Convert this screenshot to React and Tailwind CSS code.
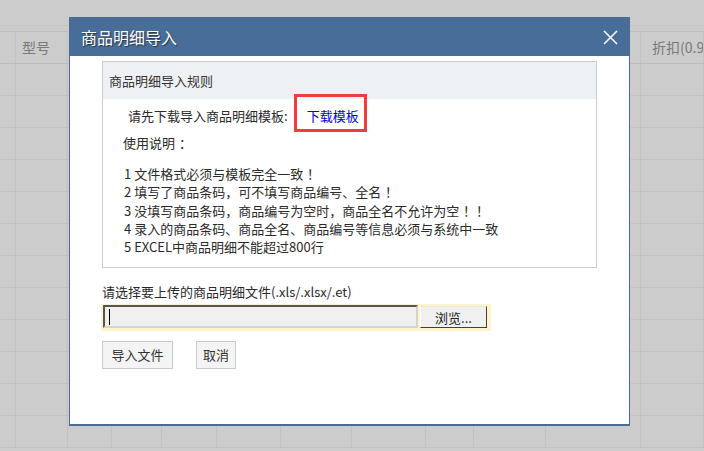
import React from "react";

const cols = [16, 52, 44, 50, 55, 64, 71, 74, 48, 72, 95, 63];

function Row({ header }) {
  return (
    <div className={"flex " + (header ? "h-[33px] border-y border-[#bdbdbd]" : "h-[32px] border-b border-[#c2c2c2]")}>
      {cols.map((w, i) => (
        <div
          key={i}
          style={{ width: w }}
          className="shrink-0 border-r border-[#c2c2c2] flex items-center overflow-hidden whitespace-nowrap text-[14px] text-[#7a7a7a]"
        >
          {header && i === 1 ? <span className="pl-[6px]">型号</span> : null}
          {header && i === 11 ? <span className="pl-[11px]">折扣(0.9</span> : null}
        </div>
      ))}
    </div>
  );
}

function FW({ text }) {
  const parts = [];
  let buf = "";
  Array.from(text).forEach((ch, i) => {
    if ("！，：、".includes(ch)) {
      if (buf) parts.push(buf);
      buf = "";
      const centered = ch === "！" || ch === "：";
      parts.push(
        <span key={i} className="inline-block w-[1em] whitespace-nowrap">
          <span className={centered ? "relative left-[0.3em]" : ""}>{ch}</span>
        </span>
      );
    } else {
      buf += ch;
    }
  });
  if (buf) parts.push(buf);
  return <>{parts}</>;
}

export default function App() {
  const rules = [
    "1 文件格式必须与模板完全一致！",
    "2 填写了商品条码，可不填写商品编号、全名！",
    "3 没填写商品条码，商品编号为空时，商品全名不允许为空！！",
    "4 录入的商品条码、商品全名、商品编号等信息必须与系统中一致",
    "5 EXCEL中商品明细不能超过800行",
  ];
  return (
    <div className="relative w-[704px] h-[451px] overflow-hidden bg-[#cccccc] font-['Noto_Sans_CJK_SC','Noto_Sans',sans-serif]">
      {/* background table */}
      <div className="flex flex-col">
        <div className="h-[25px]" />
        <div className="h-px bg-[#c4c4c4]" />
        <div className="h-[5px]" />
        <Row header />
        {Array.from({ length: 12 }).map((_, i) => (
          <Row key={i} />
        ))}
      </div>

      {/* dialog */}
      <div className="absolute left-[69px] top-[17px] w-[561px] h-[409px] bg-white border border-[#4a6b94] border-b-2 flex flex-col">
        <div className="h-[38px] shrink-0 bg-[#486d98] flex items-center justify-between pl-[11px] pr-[10px]">
          <span className="text-white text-[16px] leading-none [text-shadow:1px_1px_1px_rgba(0,0,0,0.55)]">商品明细导入</span>
          <svg width="15" height="15" viewBox="0 0 15 15" className="mr-[1px]">
            <path d="M1 1L14 14M14 1L1 14" stroke="white" strokeWidth="1.6" fill="none" />
          </svg>
        </div>

        <div className="ml-[32px] mt-[5px] w-[495px] h-[207px] border border-[#cccccc] flex flex-col text-[13px] text-[#2a2a2a]">
          <div className="h-[37px] shrink-0 bg-[#eef1f4] flex items-center pl-[6px] text-[#333]">商品明细导入规则</div>
          <div className="mt-[8px] h-[18px] leading-[18px] pl-[25px] flex whitespace-nowrap">
            <span>请先下载导入商品明细模板:</span>
            <span className="relative ml-[19px] text-[#0000ee]">
              下载模板
              <span className="absolute left-[-13px] right-[-8px] top-[-13px] bottom-[-7px] border-[3px] border-[#f03c3c]" />
            </span>
          </div>
          <div className="mt-[9px] leading-[18px] pl-[20px]">
            <FW text="使用说明：" />
          </div>
          <div className="mt-[13px] pl-[21px] leading-[18.25px]">
            {rules.map((r) => (
              <div key={r} className="whitespace-nowrap">
                <FW text={r} />
              </div>
            ))}
          </div>
        </div>

        <div className="ml-[32px] mt-[15px] leading-[18px] text-[13px] text-[#2a2a2a]">请选择要上传的商品明细文件(.xls/.xlsx/.et)</div>

        <div className="ml-[31px] mt-[3px] w-[390px] h-[27px] bg-[#fff3cc] px-[2px] py-[1px] flex items-start">
          <div className="w-[315px] h-[23px] bg-[#f0f0f0] border-2 border-t-[#555] border-l-[#555] border-b-[#d4d4d4] border-r-[#d4d4d4] flex items-center pl-[4px]">
            <div className="w-px h-[16px] bg-black" />
          </div>
          <div className="ml-[2px] mt-[1px] w-[67px] h-[22px] bg-[#f0f0f0] border border-t-[#e6e6e6] border-l-[#ffffff] border-b-[#404040] border-r-[#404040] flex items-center justify-center text-[13px] text-[#222] leading-none">
            浏览...
          </div>
        </div>

        <div className="ml-[32px] mt-[10px] flex gap-[23px] text-[13px] text-[#333]">
          <div className="w-[71px] h-[28px] bg-[#f4f4f4] border border-[#c9c9c9] flex items-center justify-center">导入文件</div>
          <div className="w-[40px] h-[28px] bg-[#f4f4f4] border border-[#c9c9c9] flex items-center justify-center">取消</div>
        </div>
      </div>
    </div>
  );
}
